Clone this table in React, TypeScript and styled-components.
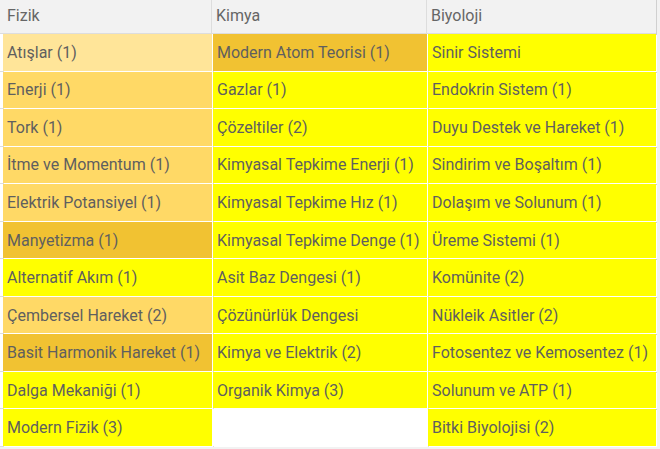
import * as React from "react";
import styled, { createGlobalStyle } from "styled-components";

const GlobalStyle = createGlobalStyle`
  html, body {
    margin: 0;
    padding: 0;
    background: #f2f2f2;
  }
  body {
    font-family: Roboto, "Liberation Sans", sans-serif;
  }
`;

const colors = {
  pale: "#ffe599",
  light: "#ffd966",
  dark: "#f1c232",
  yellow: "#ffff00",
  none: "#ffffff",
};

type Shade = keyof typeof colors;

interface ICell {
  label: string;
  shade: Shade;
}

const columns = ["Fizik", "Kimya", "Biyoloji"];

const fizik: ICell[] = [
  { label: "Atışlar (1)", shade: "pale" },
  { label: "Enerji (1)", shade: "light" },
  { label: "Tork (1)", shade: "light" },
  { label: "İtme ve Momentum (1)", shade: "light" },
  { label: "Elektrik Potansiyel (1)", shade: "light" },
  { label: "Manyetizma (1)", shade: "dark" },
  { label: "Alternatif Akım (1)", shade: "yellow" },
  { label: "Çembersel Hareket (2)", shade: "light" },
  { label: "Basit Harmonik Hareket (1)", shade: "dark" },
  { label: "Dalga Mekaniği (1)", shade: "yellow" },
  { label: "Modern Fizik (3)", shade: "yellow" },
];

const kimya: ICell[] = [
  { label: "Modern Atom Teorisi (1)", shade: "dark" },
  { label: "Gazlar (1)", shade: "yellow" },
  { label: "Çözeltiler (2)", shade: "yellow" },
  { label: "Kimyasal Tepkime Enerji (1)", shade: "yellow" },
  { label: "Kimyasal Tepkime Hız (1)", shade: "yellow" },
  { label: "Kimyasal Tepkime Denge (1)", shade: "yellow" },
  { label: "Asit Baz Dengesi (1)", shade: "yellow" },
  { label: "Çözünürlük Dengesi", shade: "yellow" },
  { label: "Kimya ve Elektrik (2)", shade: "yellow" },
  { label: "Organik Kimya (3)", shade: "yellow" },
  { label: "", shade: "none" },
];

const biyoloji: ICell[] = [
  { label: "Sinir Sistemi", shade: "yellow" },
  { label: "Endokrin Sistem (1)", shade: "yellow" },
  { label: "Duyu Destek ve Hareket (1)", shade: "yellow" },
  { label: "Sindirim ve Boşaltım (1)", shade: "yellow" },
  { label: "Dolaşım ve Solunum (1)", shade: "yellow" },
  { label: "Üreme Sistemi (1)", shade: "yellow" },
  { label: "Komünite (2)", shade: "yellow" },
  { label: "Nükleik Asitler (2)", shade: "yellow" },
  { label: "Fotosentez ve Kemosentez (1)", shade: "yellow" },
  { label: "Solunum ve ATP (1)", shade: "yellow" },
  { label: "Bitki Biyolojisi (2)", shade: "yellow" },
];

const STable = styled.div`
  width: 656px;
  background: #ffffff;
  border-right: 1px solid #d0d0d0;
`;

const SHeadRow = styled.div`
  display: grid;
  grid-template-columns: 212px 215px 229px;
  height: 33px;
  background: #f2f2f2;
  border-bottom: 1px solid #dddddd;
`;

const SHeadCell = styled.div`
  display: flex;
  align-items: flex-start;
  padding: 6px 0 0 7px;
  font-size: 16px;
  color: #666666;
  border-right: 1px solid #dddddd;
  &:first-child {
    padding-left: 7px;
  }
  &:nth-child(2),
  &:nth-child(3) {
    padding-left: 4px;
  }
  &:last-child {
    border-right: none;
  }
`;

const SRow = styled.div`
  display: grid;
  grid-template-columns: 209px 214px 228px;
  column-gap: 1px;
  padding-left: 3px;
  height: 36.55px;
  border-bottom: 1px solid #dddddd;
`;

const SCell = styled.div<{ shade: Shade }>`
  display: flex;
  align-items: center;
  padding-left: 4px;
  font-size: 16px;
  color: #5f5f5f;
  white-space: nowrap;
  overflow: hidden;
  background: ${({ shade }) => colors[shade]};
  box-shadow: 1px 1px 0 #ffffff;
`;

const App = () => {
  const rows = fizik.map((f, i) => [f, kimya[i], biyoloji[i]]);
  return (
    <>
      <GlobalStyle />
      <STable>
        <SHeadRow>
          {columns.map((c) => (
            <SHeadCell key={c}>{c}</SHeadCell>
          ))}
        </SHeadRow>
        {rows.map((row, i) => (
          <SRow key={i}>
            {row.map((cell, j) => (
              <SCell key={j} shade={cell.shade}>
                {cell.label}
              </SCell>
            ))}
          </SRow>
        ))}
      </STable>
    </>
  );
};

export default App;
